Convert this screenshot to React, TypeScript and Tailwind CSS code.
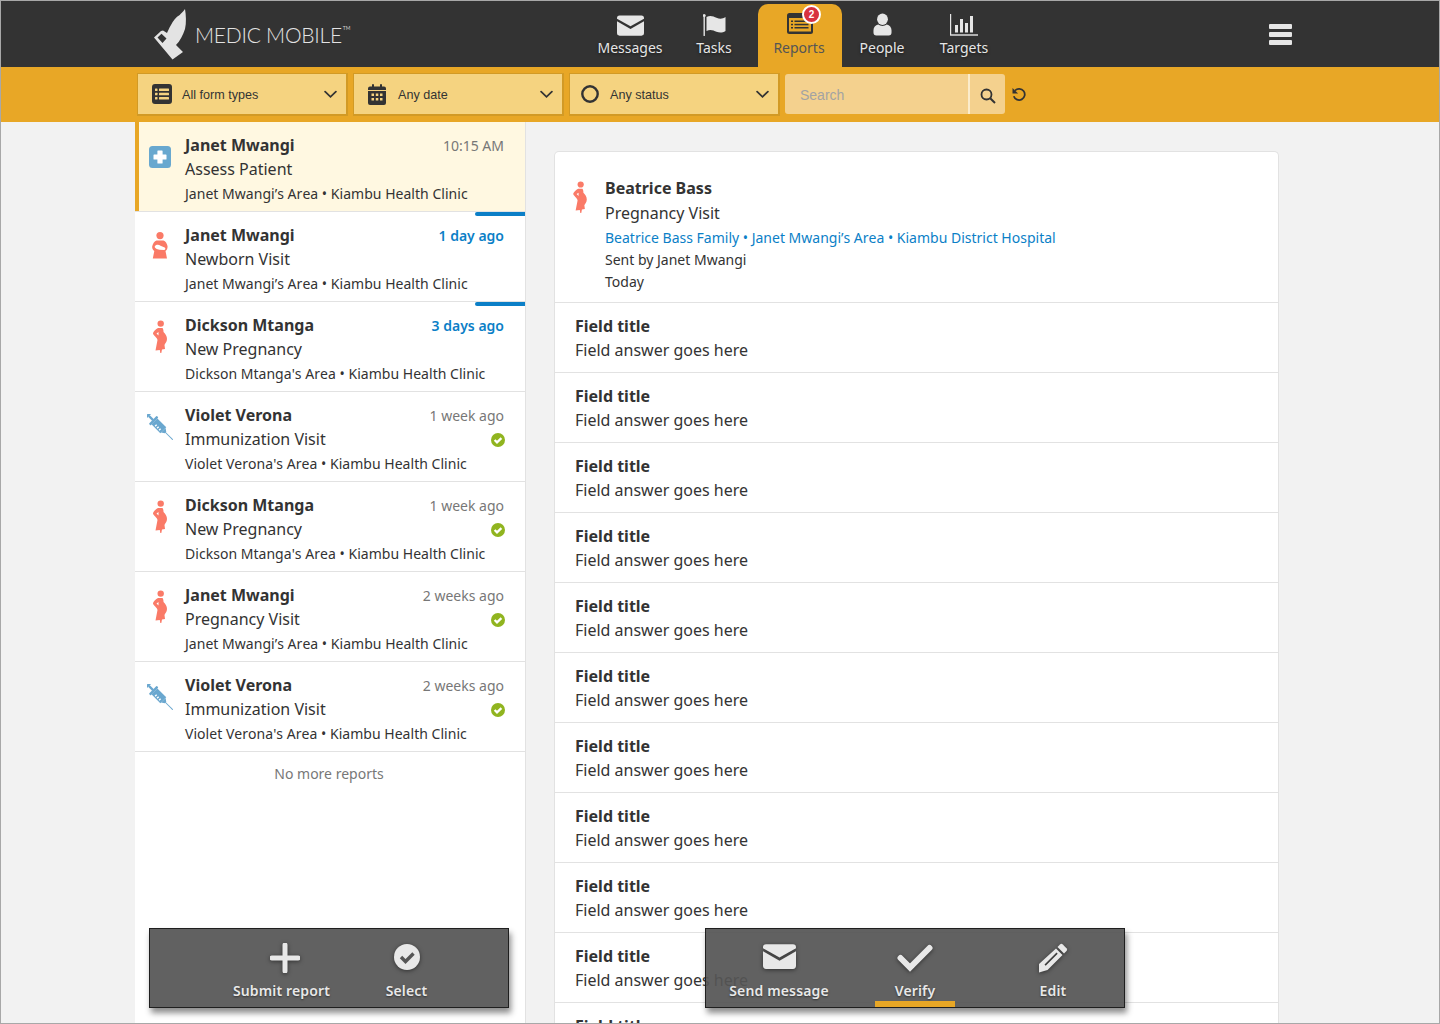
import React from "react";

const Envelope = ({ cls }: { cls: string }) => (
  <svg viewBox="0 0 32 24" className={cls}>
    <path d="M3 0h26a3 3 0 0 1 3 3v1L16 13 0 4V3a3 3 0 0 1 3-3z" fill="currentColor" />
    <path d="M0 7l16 9 16-9v14a3 3 0 0 1-3 3H3a3 3 0 0 1-3-3z" fill="currentColor" />
  </svg>
);

const Woman = ({ cls }: { cls: string }) => (
  <svg viewBox="0 0 14 33" className={cls}>
    <circle cx="7.700" cy="3.600" r="3.200" fill="#fa7a67" />
    <path
      fillRule="evenodd"
      d="M5 8h4.500c1 1.500 1 3 1 4 2 2 3.500 4 3.500 7 0 3-2 4.500-2.500 6l.5 4-3 .5-.7 3.500h-1l-.5-3-4.300.5 2-10.500C4.500 18 0 15 0 13.500 0 12 3 9 5 8zM3.500 13.500l2 2v-3.500z"
      fill="#fa7a67"
    />
  </svg>
);

const Mother = ({ cls }: { cls: string }) => (
  <svg viewBox="0 0 16 28" className={cls}>
    <circle cx="8" cy="3.600" r="3.600" fill="#fa7a67" />
    <path d="M4.500 8.500h7c2 .8 3.500 3 4 5.500.3 2-.5 4-2 5l1.500 7.500H.8l1.500-7.500C.7 18 -.2 16 .3 14c.6-2.500 2.200-4.700 4.200-5.500z" fill="#fa7a67" />
    <path d="M2.800 14.200c1.700-2 4-1.700 5.700-.4l4.200 1.700c1.200.8.700 2.600-.8 2.500l-4.400-.3C5 17.500 2.300 16 2.800 14.200z" fill="#fff" />
  </svg>
);

const Syringe = ({ cls }: { cls: string }) => (
  <svg viewBox="0 0 28 28" className={cls}>
    <g transform="rotate(45 14 14)" fill="#6aa7cf">
      <rect x="-5.500" y="10" width="2.800" height="8" rx=".8" />
      <rect x="-3" y="12.800" width="6.500" height="2.400" />
      <rect x="3" y="8" width="2.600" height="12" rx=".8" />
      <path d="M5.500 9.500h13.500v9H5.500z" />
      <path d="M19 10.500l3.500 2.500v2l-3.500 2.500z" />
      <rect x="22" y="13.500" width="11.500" height="1" />
      <g fill="#fff">
        <rect x="9" y="14.800" width="1.500" height="2.400" />
        <rect x="12" y="14.800" width="1.500" height="2.400" />
        <rect x="15" y="14.800" width="1.500" height="2.400" />
      </g>
    </g>
  </svg>
);

const Assess = ({ cls }: { cls: string }) => (
  <svg viewBox="0 0 22 22" className={cls}>
    <rect width="22" height="22" rx="3.500" fill="#68a8cf" />
    <path d="M9 4.500h4a.6.6 0 0 1 .6.600V8.400h3.300a.6.6 0 0 1 .6.600v4a.6.6 0 0 1-.6.600h-3.300v3.300a.6.6 0 0 1-.6.600H9a.6.6 0 0 1-.6-.600v-3.300H5.100a.6.6 0 0 1-.6-.600V9a.6.6 0 0 1 .6-.600h3.300V5.100A.6.6 0 0 1 9 4.500z" fill="#fff" />
  </svg>
);

const Check = () => (
  <svg viewBox="0 0 14 14" className="h-[14px] w-[14px]">
    <circle cx="7" cy="7" r="7" fill="#90b41f" />
    <path d="M3.600 7l2.400 2.400 4.400-4.300" fill="none" stroke="#fff" strokeWidth="2.200" />
  </svg>
);

const Chevron = () => (
  <svg viewBox="0 0 14 9" className="h-[9px] w-[13px]">
    <path d="M1.200 1.500L7 7l5.800-5.500" fill="none" stroke="#333" strokeWidth="1.900" strokeLinecap="round" />
  </svg>
);

const navItems = [
  {
    label: "Messages",
    w: "w-[84px]",
    icon: <Envelope cls="h-[21px] w-[27px]" />,
  },
  {
    label: "Tasks",
    w: "w-[84px]",
    icon: (
      <svg viewBox="0 0 26 22" className="ml-[3px] h-[22px] w-[26px]">
        <rect x="0.500" y="1" width="1.400" height="21" rx=".6" fill="currentColor" />
        <circle cx="1.200" cy="1.500" r="1.500" fill="currentColor" />
        <path d="M3.500 3c4-2 7-.5 10 .8 3.500 1.400 6 1.200 9-.8v14c-3 2-6 2-9 .8-3-1.300-6-2.800-10-.8z" fill="currentColor" />
      </svg>
    ),
  },
  { label: "Reports", w: "", icon: null },
  {
    label: "People",
    w: "w-[80px]",
    icon: (
      <svg viewBox="0 0 20 23" className="h-[23px] w-[19px]">
        <ellipse cx="10" cy="6" rx="5.700" ry="6" fill="currentColor" />
        <path d="M5.500 11.500c2.500 2 6.500 2 9 0 3 .8 5 3 5 6V20a3 3 0 0 1-3 3h-13a3 3 0 0 1-3-3v-2.500c0-3 2-5.200 5-6z" fill="currentColor" />
      </svg>
    ),
  },
  {
    label: "Targets",
    w: "w-[84px]",
    icon: (
      <svg viewBox="0 0 28 22" className="h-[22px] w-[28px]">
        <rect x="0" y="0" width="1.200" height="21" fill="currentColor" />
        <rect x="0" y="20.300" width="28" height="1.400" fill="currentColor" />
        <rect x="5" y="11" width="3" height="7.500" fill="currentColor" />
        <rect x="10" y="5" width="3" height="13.500" fill="currentColor" />
        <rect x="15" y="9" width="3" height="9.500" fill="currentColor" />
        <rect x="20" y="2" width="3" height="16.500" fill="currentColor" />
      </svg>
    ),
  },
];

const filters = [
  {
    label: "All form types",
    pl: "pl-[14px]",
    gap: "ml-[10px]",
    icon: (
      <svg viewBox="0 0 20 20" className="h-[20px] w-[20px]">
        <rect width="20" height="20" rx="3" fill="#333" />
        <g fill="#f5d380">
          <rect x="3" y="4.500" width="2.500" height="2.500" rx=".5" />
          <rect x="3" y="8.800" width="2.500" height="2.500" rx=".5" />
          <rect x="3" y="13" width="2.500" height="2.500" rx=".5" />
          <rect x="7" y="4.500" width="10" height="2.500" rx=".5" />
          <rect x="7" y="8.800" width="10" height="2.500" rx=".5" />
          <rect x="7" y="13" width="10" height="2.500" rx=".5" />
        </g>
      </svg>
    ),
  },
  {
    label: "Any date",
    pl: "pl-[14px]",
    gap: "ml-[12px]",
    icon: (
      <svg viewBox="0 0 18 21" className="h-[21px] w-[18px]">
        <path d="M2 2.500h2V1a1 1 0 0 1 2 0v1.500h6V1a1 1 0 0 1 2 0v1.500h2a2 2 0 0 1 2 2V6H0V4.500a2 2 0 0 1 2-2z" fill="#333" />
        <path d="M0 7h18v12a2 2 0 0 1-2 2H2a2 2 0 0 1-2-2z" fill="#333" />
        <g fill="#f5d380">
          <rect x="3.500" y="9.500" width="2.500" height="2.500" />
          <rect x="7.800" y="9.500" width="2.500" height="2.500" />
          <rect x="12" y="9.500" width="2.500" height="2.500" />
          <rect x="3.500" y="14" width="2.500" height="2.500" />
          <rect x="7.800" y="14" width="2.500" height="2.500" />
          <rect x="12" y="14" width="2.500" height="2.500" />
        </g>
      </svg>
    ),
  },
  {
    label: "Any status",
    pl: "pl-[11px]",
    gap: "ml-[11px]",
    icon: (
      <svg viewBox="0 0 18 18" className="h-[18px] w-[18px]">
        <circle cx="9" cy="9" r="7.700" fill="none" stroke="#333" strokeWidth="2.400" />
      </svg>
    ),
  },
];

type Report = {
  name: string;
  form: string;
  place: string;
  time: string;
  kind: "assess" | "mother" | "woman" | "syringe";
  unread?: boolean;
  done?: boolean;
  selected?: boolean;
};

const reports: Report[] = [
  { name: "Janet Mwangi", form: "Assess Patient", place: "Janet Mwangi’s Area • Kiambu Health Clinic", time: "10:15 AM", kind: "assess", selected: true },
  { name: "Janet Mwangi", form: "Newborn Visit", place: "Janet Mwangi’s Area • Kiambu Health Clinic", time: "1 day ago", kind: "mother", unread: true },
  { name: "Dickson Mtanga", form: "New Pregnancy", place: "Dickson Mtanga's Area • Kiambu Health Clinic", time: "3 days ago", kind: "woman", unread: true },
  { name: "Violet Verona", form: "Immunization Visit", place: "Violet Verona's Area • Kiambu Health Clinic", time: "1 week ago", kind: "syringe", done: true },
  { name: "Dickson Mtanga", form: "New Pregnancy", place: "Dickson Mtanga's Area • Kiambu Health Clinic", time: "1 week ago", kind: "woman", done: true },
  { name: "Janet Mwangi", form: "Pregnancy Visit", place: "Janet Mwangi’s Area • Kiambu Health Clinic", time: "2 weeks ago", kind: "woman", done: true },
  { name: "Violet Verona", form: "Immunization Visit", place: "Violet Verona's Area • Kiambu Health Clinic", time: "2 weeks ago", kind: "syringe", done: true },
];

const ReportIcon = ({ kind }: { kind: Report["kind"] }) => {
  if (kind === "assess") return <div className="pl-[14px] pt-[24px]"><Assess cls="h-[22px] w-[22px]" /></div>;
  if (kind === "mother") return <div className="pl-[17px] pt-[20px]"><Mother cls="h-[28px] w-[16px]" /></div>;
  if (kind === "woman") return <div className="pl-[18px] pt-[18px]"><Woman cls="h-[33px] w-[14px]" /></div>;
  return <div className="pl-[12px] pt-[22px]"><Syringe cls="h-[26px] w-[26px]" /></div>;
};

const ReportRow = ({ r }: { r: Report }) => (
  <div className={`relative flex h-[90px] border-b border-[#e2e2e2] ${r.selected ? "bg-[#fff8e1]" : "bg-white"}`}>
    {r.selected && <div className="absolute left-0 top-0 h-full w-[4px] bg-[#e8a726]" />}
    {r.unread && <div className="absolute right-0 top-0 h-[4px] w-[50px] rounded-l-[2px] bg-[#0b7fc7]" />}
    <div className="w-[50px] shrink-0"><ReportIcon kind={r.kind} /></div>
    <div className="min-w-0 flex-1 pr-[21px] pt-[11px]">
      <div className="flex h-[24px] items-center justify-between">
        <span className="text-[16px] font-bold leading-[24px] text-[#333]">{r.name}</span>
        {r.unread ? (
          <span className="text-[14px] font-semibold text-[#0b7fc7]">{r.time}</span>
        ) : (
          <span className="text-[14px] text-[#777]">{r.time}</span>
        )}
      </div>
      <div className="flex h-[24px] items-center justify-between">
        <span className="text-[16px] leading-[24px] text-[#333]">{r.form}</span>
        {r.done && <span className="-mr-[1px] flex pt-[2px]"><Check /></span>}
      </div>
      <div className="mt-[1px] text-[14px] leading-[24px] tracking-[0.03px] text-[#333] [font-kerning:none]">{r.place}</div>
    </div>
  </div>
);

const FabItem = ({ icon, label, cls, active }: { icon: React.ReactNode; label: string; cls: string; active?: boolean }) => (
  <div className={`relative flex h-full flex-col items-center text-[#e8e8e8] ${cls}`}>
    <div className="flex h-[52px] items-center pt-[2px] [filter:drop-shadow(0_1px_2px_rgba(0,0,0,0.5))]">{icon}</div>
    <div className="text-[14px] font-semibold leading-[20px] tracking-[0.15px] [text-shadow:0_1px_2px_rgba(0,0,0,0.5)]">{label}</div>
    {active && <div className="absolute bottom-0 left-1/2 h-[6px] w-[80px] -translate-x-1/2 bg-[#e8a726]" />}
  </div>
);

export default function App() {
  return (
    <div className="relative flex h-[1024px] w-[1440px] flex-col overflow-hidden border border-[#a8a8a8] bg-[#f2f2f2] font-['Noto_Sans',sans-serif] text-[#333]">
      <header className="flex h-[66px] shrink-0 bg-[#333333]">
        <div className="flex w-[587px] shrink-0 items-center pl-[151px]">
          <svg viewBox="0 0 36 54" className="h-[54px] w-[36px]">
            <path
              fillRule="evenodd"
              d="M33 2C31 5 29 6 27.700 8 24 10 21 14 19 18c-2 3-3 6-4 8l-4-2.500-2 .500-7 6.500 18.500 22L31 45l-7-7c4-4 7-10 9-16 1.500-6 1-14 0-20zM5.500 30.500l4-3.800 5 4.800-4 4.500z"
              fill="#e3e3e3"
            />
          </svg>
          <span className="ml-[7px] font-['Lato',sans-serif] text-[21px] font-light leading-none tracking-[-0.25px] text-[#e3e3e3]">MEDIC MOBILE</span>
          <span className="-mt-[12px] ml-[1px] font-['Lato',sans-serif] text-[5px] leading-none text-[#d0d0d0]">TM</span>
        </div>
        <nav className="flex pt-[3px]">
          {navItems.map((n) =>
            n.label === "Reports" ? (
              <div key={n.label} className="relative ml-[2px] flex h-[63px] w-[84px] flex-col items-center rounded-t-[10px] bg-[#e8a726]">
                <svg viewBox="0 0 26 21" className="mt-[9px] h-[21px] w-[26px]">
                  <rect width="26" height="21" rx="2.500" fill="#333" />
                  <rect x="2" y="5" width="22" height="13.500" fill="#e8a726" />
                  <g fill="#333">
                    <rect x="4" y="7.500" width="2" height="1.500" />
                    <rect x="4" y="10.800" width="2" height="1.500" />
                    <rect x="4" y="14" width="2" height="1.500" />
                    <rect x="7.500" y="7.500" width="14" height="1.500" />
                    <rect x="7.500" y="10.800" width="14" height="1.500" />
                    <rect x="7.500" y="14" width="14" height="1.500" />
                  </g>
                </svg>
                <span className="-ml-[2px] mt-[2px] text-[14px] leading-[24px] text-[#555]">{n.label}</span>
                <span className="absolute left-[44px] top-[1px] flex h-[19px] w-[19px] items-center justify-center rounded-full border-[2px] border-white bg-[#d8323f] font-['Liberation_Sans',sans-serif] text-[10px] font-bold leading-none text-white">2</span>
              </div>
            ) : (
              <div key={n.label} className={`flex flex-col items-center text-[#e6e6e6] ${n.w}`}>
                <div className="flex h-[32px] items-end">{n.icon}</div>
                <span className="text-[14px] leading-[24px] [text-shadow:0_1px_3px_rgba(0,0,0,0.6)]">{n.label}</span>
              </div>
            )
          )}
        </nav>
        <div className="ml-[263px] flex flex-col gap-[3px] pt-[23px]">
          <div className="h-[5px] w-[23px] rounded-[1px] bg-[#e6e6e6]" />
          <div className="h-[5px] w-[23px] rounded-[1px] bg-[#e6e6e6]" />
          <div className="h-[5px] w-[23px] rounded-[1px] bg-[#e6e6e6]" />
        </div>
      </header>

      <div className="flex h-[55px] shrink-0 items-start gap-[5px] bg-[#e8a726] pl-[136px] pt-[6px]">
        {filters.map((f) => (
          <div key={f.label} className={`flex h-[43px] w-[211px] items-center border border-b-2 border-r-2 border-[#d29a25] bg-[#f5d380] pr-[9px] ${f.pl} font-['Liberation_Sans',sans-serif] text-[12.6px]`}>
            {f.icon}
            <span className={`${f.gap} flex-1 pt-[3px] text-[#333]`}>{f.label}</span>
            <Chevron />
          </div>
        ))}
        <div className="mt-[1px] flex h-[40px] w-[220px] overflow-hidden rounded-[3px] bg-[#f4d18e] font-['Liberation_Sans',sans-serif] text-[14px]">
          <div className="flex flex-1 items-center border-r-2 border-[#fbeccb] pl-[15px] pt-[2px] text-[#a3a3a3]">Search</div>
          <div className="flex w-[35px] items-center justify-center pt-[4px]">
            <svg viewBox="0 0 16 16" className="h-[16px] w-[16px]">
              <circle cx="6.500" cy="6.500" r="5" fill="none" stroke="#333" strokeWidth="1.800" />
              <path d="M10.200 10.200L15 15" stroke="#333" strokeWidth="2" />
            </svg>
          </div>
        </div>
        <div className="ml-[2px] mt-[1px] flex h-[40px] items-center">
          <svg viewBox="0 0 16 16" className="h-[15px] w-[15px]">
            <path d="M3.200 3.800a6 6 0 1 1-1.300 6" fill="none" stroke="#333" strokeWidth="1.900" />
            <path d="M0.500 1v6h6z" fill="#333" />
          </svg>
        </div>
      </div>

      <main className="flex min-h-0 flex-1 pl-[134px]">
        <aside className="relative w-[391px] shrink-0 border-r border-[#e2e2e2] bg-white">
          {reports.map((r, i) => (
            <ReportRow key={i} r={r} />
          ))}
          <div className="pr-[2px] pt-[10px] text-center text-[14px] leading-[24px] text-[#777]">No more reports</div>
        </aside>

        <section className="ml-[28px] mt-[29px] w-[725px] shrink-0 rounded-t-[5px] border border-b-0 border-[#e2e2e2] bg-white">
          <div className="flex h-[151px] border-b border-[#e2e2e2]">
            <div className="w-[50px] shrink-0 pl-[18px] pt-[29px]"><Woman cls="h-[32px] w-[14px]" /></div>
            <div className="pt-[24px]">
              <div className="text-[16px] font-bold leading-[25px]">Beatrice Bass</div>
              <div className="text-[16px] leading-[25px]">Pregnancy Visit</div>
              <div className="text-[14px] leading-[23px] text-[#0b7fc7] [font-kerning:none]">Beatrice Bass Family • Janet Mwangi’s Area • Kiambu District Hospital</div>
              <div className="text-[14px] leading-[22px]">Sent by Janet Mwangi</div>
              <div className="text-[14px] leading-[22px]">Today</div>
            </div>
          </div>
          {Array.from({ length: 11 }).map((_, i) => (
            <div key={i} className="h-[70px] border-b border-[#e2e2e2] pl-[20px] pt-[11px]">
              <div className="text-[16px] font-bold leading-[24px]">Field title</div>
              <div className="text-[16px] leading-[24px]">Field answer goes here</div>
            </div>
          ))}
        </section>
      </main>

      <div className="absolute left-[148px] top-[927px] flex h-[80px] w-[360px] border border-[#1f1f1f] bg-[#555555]/[0.93] pl-[71px] shadow-[2px_5px_6px_rgba(0,0,0,0.45)]">
        <FabItem
          cls="w-[121px]"
          label="Submit report"
          icon={
            <svg viewBox="0 0 30 30" className="ml-[7px] mt-[4px] h-[30px] w-[30px]">
              <path d="M12.500 2a2.500 2.500 0 0 1 5 0v10.500H28a2.500 2.500 0 0 1 0 5H17.500V28a2.500 2.500 0 0 1-5 0V17.500H2a2.500 2.500 0 0 1 0-5h10.500z" fill="currentColor" />
            </svg>
          }
        />
        <FabItem
          cls="w-[129px]"
          label="Select"
          icon={
            <svg viewBox="0 0 26 26" className="mt-[2px] h-[26px] w-[26px]">
              <circle cx="13" cy="13" r="13" fill="currentColor" />
              <path d="M7 13l4.500 4.500L19.500 9.500" fill="none" stroke="#555" strokeWidth="3.400" />
            </svg>
          }
        />
      </div>

      <div className="absolute left-[704px] top-[927px] flex h-[80px] w-[420px] border border-[#1f1f1f] bg-[#555555]/[0.93] pl-[13px] shadow-[2px_5px_6px_rgba(0,0,0,0.45)]">
        <FabItem cls="w-[120px]" label="Send message" icon={<Envelope cls="h-[25px] w-[33px]" />} />
        <FabItem
          cls="w-[152px]"
          active
          label="Verify"
          icon={
            <svg viewBox="0 0 36 28" className="mt-[3px] h-[28px] w-[36px]">
              <path d="M3.500 14l9.500 9.500L32.500 4" fill="none" stroke="currentColor" strokeWidth="6" strokeLinecap="round" strokeLinejoin="miter" />
            </svg>
          }
        />
        <FabItem
          cls="w-[124px]"
          label="Edit"
          icon={
            <svg viewBox="0 0 30 30" className="mt-[4px] h-[30px] w-[30px]">
              <path d="M22 1.500a2 2 0 0 1 2.800 0l3.700 3.700a2 2 0 0 1 0 2.800L26 10.500 19.500 4z" fill="currentColor" />
              <path fillRule="evenodd" d="M18 5.500l6.500 6.500L9.500 27 1 29.500V21zM18.500 9.500L6.500 21.500l1.200 1.200 12-12z" fill="currentColor" />
            </svg>
          }
        />
      </div>
    </div>
  );
}
